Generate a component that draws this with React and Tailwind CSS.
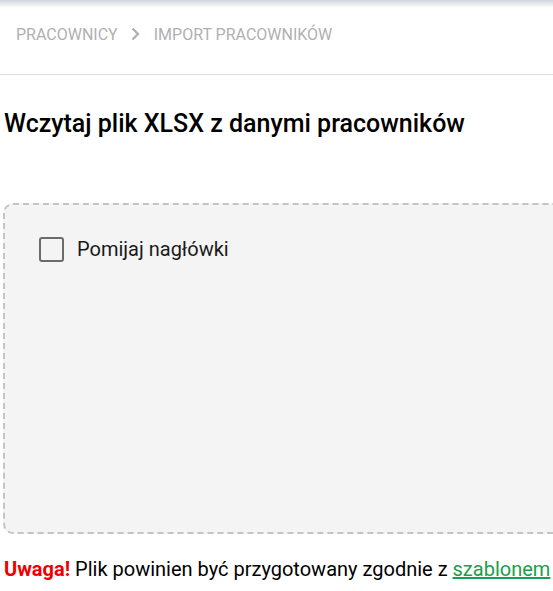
import React from 'react';

const App = () => {
  return (
    <div className="min-h-screen bg-white overflow-hidden" style={{ fontFamily: 'Roboto, "Liberation Sans", sans-serif' }}>
      <div className="h-[8px] bg-gradient-to-b from-gray-300 to-white" />
      <nav className="h-[67px] border-b border-[#e0e0e0] flex items-start pt-[15px] pl-4 text-[16px] text-[#b0b0b0] uppercase">
        <span>Pracownicy</span>
        <svg className="w-4 h-4 mx-[10px] mt-[3px]" viewBox="0 0 24 24" fill="none" stroke="#b0b0b0" strokeWidth="3.5" strokeLinecap="square">
          <path d="M8 5l7 7-7 7" />
        </svg>
        <span>Import pracowników</span>
      </nav>
      <div className="pl-[3px]">
        <h1 className="mt-[34px] pl-[1px] text-[25px] font-medium text-black leading-[30px]">
          Wczytaj plik XLSX z danymi pracowników
        </h1>
        <div className="mt-[64px] w-[600px] h-[331px] border-2 border-dashed border-[#c4c4c4] rounded-[10px] bg-[#f4f4f4] pt-[31px] pl-[34px]">
          <label className="flex items-center gap-[13px] text-[20px] leading-[26px] text-[#1a1a1a]">
            <span className="w-[25px] h-[25px] border-2 border-[#6b6b6b] rounded-[3px] bg-[#f4f4f4]" />
            Pomijaj nagłówki
          </label>
        </div>
        <p className="mt-[20px] pl-[1px] text-[20px] text-black whitespace-nowrap">
          <span className="font-bold text-[#ee0000]">Uwaga!</span> Plik powinien być przygotowany zgodnie z{' '}
          <a href="#" className="text-[#1a9e4a] underline">szablonem</a>
        </p>
      </div>
    </div>
  );
};

export default App;
